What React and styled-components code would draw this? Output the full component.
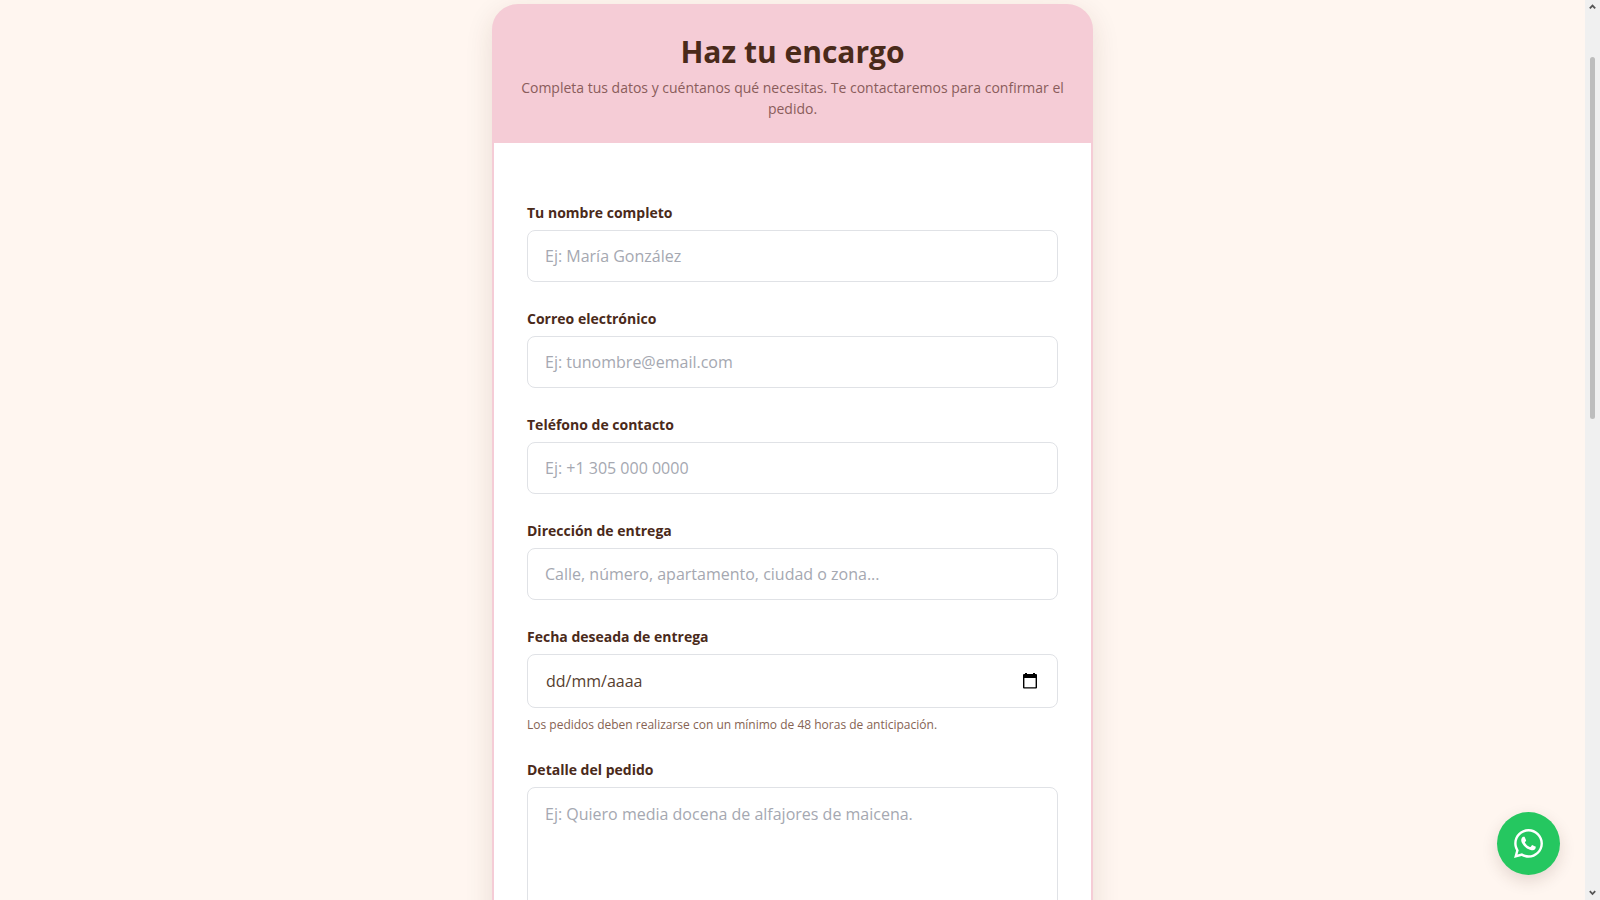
import React, { useState } from 'react'
import styled, { createGlobalStyle } from 'styled-components';
import { FaWhatsapp } from 'react-icons/fa';

const fields = [
    { name: 'nombre', label: 'Tu nombre completo', type: 'text', placeholder: 'Ej: María González' },
    { name: 'correo', label: 'Correo electrónico', type: 'email', placeholder: 'Ej: tunombre@email.com' },
    { name: 'telefono', label: 'Teléfono de contacto', type: 'tel', placeholder: 'Ej: +1 305 000 0000' },
    { name: 'direccion', label: 'Dirección de entrega', type: 'text', placeholder: 'Calle, número, apartamento, ciudad o zona...' },
]

function App() {
    const [pedido, setPedido] = useState({})

    const handleChange = (e) => {
        setPedido({ ...pedido, [e.target.name]: e.target.value })
    }

    return (
        <>
            <GlobalStyle />
            <Shell>
                <Page>
                    <Card>
                        <CardHeader>
                            <h1>Haz tu encargo</h1>
                            <p>Completa tus datos y cuéntanos qué necesitas. Te contactaremos para confirmar el pedido.</p>
                        </CardHeader>
                        <Form>
                            {fields.map(({ name, label, type, placeholder }) => (
                                <Field key={name}>
                                    <Label htmlFor={name}>{label}</Label>
                                    <Input
                                        id={name}
                                        name={name}
                                        type={type}
                                        placeholder={placeholder}
                                        value={pedido[name] || ''}
                                        onChange={handleChange}
                                    />
                                </Field>
                            ))}
                            <Field>
                                <Label htmlFor="fecha">Fecha deseada de entrega</Label>
                                <DateBox>
                                    <input
                                        id="fecha"
                                        name="fecha"
                                        type="text"
                                        placeholder="dd/mm/aaaa"
                                        value={pedido.fecha || ''}
                                        onChange={handleChange}
                                    />
                                    <button type="button" aria-label="Abrir calendario">
                                        <CalendarIcon />
                                    </button>
                                </DateBox>
                                <Hint>Los pedidos deben realizarse con un mínimo de 48 horas de anticipación.</Hint>
                            </Field>
                            <Field>
                                <Label htmlFor="detalle">Detalle del pedido</Label>
                                <TextArea
                                    id="detalle"
                                    name="detalle"
                                    placeholder="Ej: Quiero media docena de alfajores de maicena."
                                    value={pedido.detalle || ''}
                                    onChange={handleChange}
                                />
                            </Field>
                        </Form>
                    </Card>
                </Page>
                <ScrollTrack aria-hidden="true">
                    <Arrow />
                    <Thumb />
                    <Arrow $down />
                </ScrollTrack>
            </Shell>
            <WhatsappButton href="#whatsapp" aria-label="WhatsApp">
                <FaWhatsapp size={33} />
            </WhatsappButton>
        </>
    )
}

function CalendarIcon() {
    return (
        <svg width="14" height="16" viewBox="0 0 14 16">
            <path d="M2 0h2v1h6V0h2v1h1a1 1 0 0 1 1 1v12.500a1 1 0 0 1-1 1H1a1 1 0 0 1-1-1V2a1 1 0 0 1 1-1h1zM1.400 5v9.200h11.200V5z" fill="#000" fillRule="evenodd" />
        </svg>
    )
}

function Arrow({ $down }) {
    return (
        <svg width="7" height="6" viewBox="0 0 7 6">
            <path d={$down ? 'M.8 1.200l2.700 2.800L6.200 1.200' : 'M.8 4.400l2.700-2.800L6.200 4.400'} fill="none" stroke="#555" strokeWidth="1.800" />
        </svg>
    )
}

const GlobalStyle = createGlobalStyle`
    *{
        box-sizing: border-box;
    }
    body{
        margin: 0;
        background: #FFF6F0;
        color: #4A2A1A;
        font-family: 'Open Sans', 'Noto Sans', sans-serif;
    }
    input, textarea, button{
        font-family: inherit;
    }
`;

const Shell = styled.div`
    display: grid;
    grid-template-columns: 1fr 15px;
    height: 100vh;
    overflow: hidden;
`;

const Page = styled.main`
    display: flex;
    justify-content: center;
    align-items: flex-start;
    padding: 4px 16px 0;
    min-height: 0;
`;

const Card = styled.section`
    width: 100%;
    max-width: 601px;
    background: #F5CCD6;
    border: 2px solid #F5CCD6;
    border-radius: 26px;
    box-shadow: 0 8px 28px rgba(74, 42, 26, 0.12);
    overflow: hidden;
`;

const CardHeader = styled.header`
    padding: 24px;
    text-align: center;
    h1{
        margin: 0 0 3px;
        font-size: 30px;
        line-height: 44px;
        font-weight: 700;
    }
    p{
        margin: 0;
        font-size: 14px;
        line-height: 21px;
        color: #8A5C5B;
    }
`;

const Form = styled.form`
    display: flex;
    flex-direction: column;
    gap: 25px;
    padding: 58px 33px 33px;
    background: #FFFFFF;
`;

const Field = styled.div`
    display: flex;
    flex-direction: column;
`;

const Label = styled.label`
    margin-bottom: 5px;
    font-size: 14px;
    line-height: 24px;
    font-weight: 700;
`;

const Input = styled.input`
    height: 52px;
    padding: 0 17px;
    border: 1px solid #E0E2E6;
    border-radius: 8px;
    background: #FFFFFF;
    color: #4A2A1A;
    font-size: 16px;
    &::placeholder{
        color: #A5A8B1;
        opacity: 1;
    }
`;

const DateBox = styled.div`
    display: flex;
    align-items: center;
    height: 54px;
    padding: 0 20px 0 18px;
    border: 1px solid #E0E2E6;
    border-radius: 8px;
    input{
        flex: 1;
        min-width: 0;
        padding: 0;
        border: 0;
        outline: 0;
        background: transparent;
        color: #4A2A1A;
        font-size: 16px;
    }
    input::placeholder{
        color: #56402F;
        opacity: 1;
    }
    button{
        display: flex;
        padding: 0;
        border: 0;
        background: none;
        cursor: pointer;
    }
`;

const Hint = styled.small`
    margin-top: 9px;
    font-size: 12px;
    line-height: 16px;
    color: #866353;
`;

const TextArea = styled.textarea`
    height: 140px;
    padding: 14px 17px;
    border: 1px solid #E0E2E6;
    border-radius: 8px;
    color: #4A2A1A;
    font-size: 16px;
    line-height: 24px;
    resize: none;
    &::placeholder{
        color: #A5A8B1;
        opacity: 1;
    }
`;

const ScrollTrack = styled.div`
    display: flex;
    flex-direction: column;
    align-items: center;
    padding: 4px 0;
    background: #F0F0F0;
    svg:last-child{
        margin-top: auto;
    }
`;

const Thumb = styled.div`
    width: 5px;
    height: 362px;
    margin-top: 47px;
    border-radius: 3px;
    background: #BDBDBD;
`;

const WhatsappButton = styled.a`
    position: fixed;
    right: 40px;
    bottom: 25px;
    display: flex;
    align-items: center;
    justify-content: center;
    width: 63px;
    height: 63px;
    border-radius: 50%;
    background: #25C760;
    color: #FFFFFF;
    box-shadow: 0 6px 16px rgba(74, 42, 26, 0.15);
`;

export default App
